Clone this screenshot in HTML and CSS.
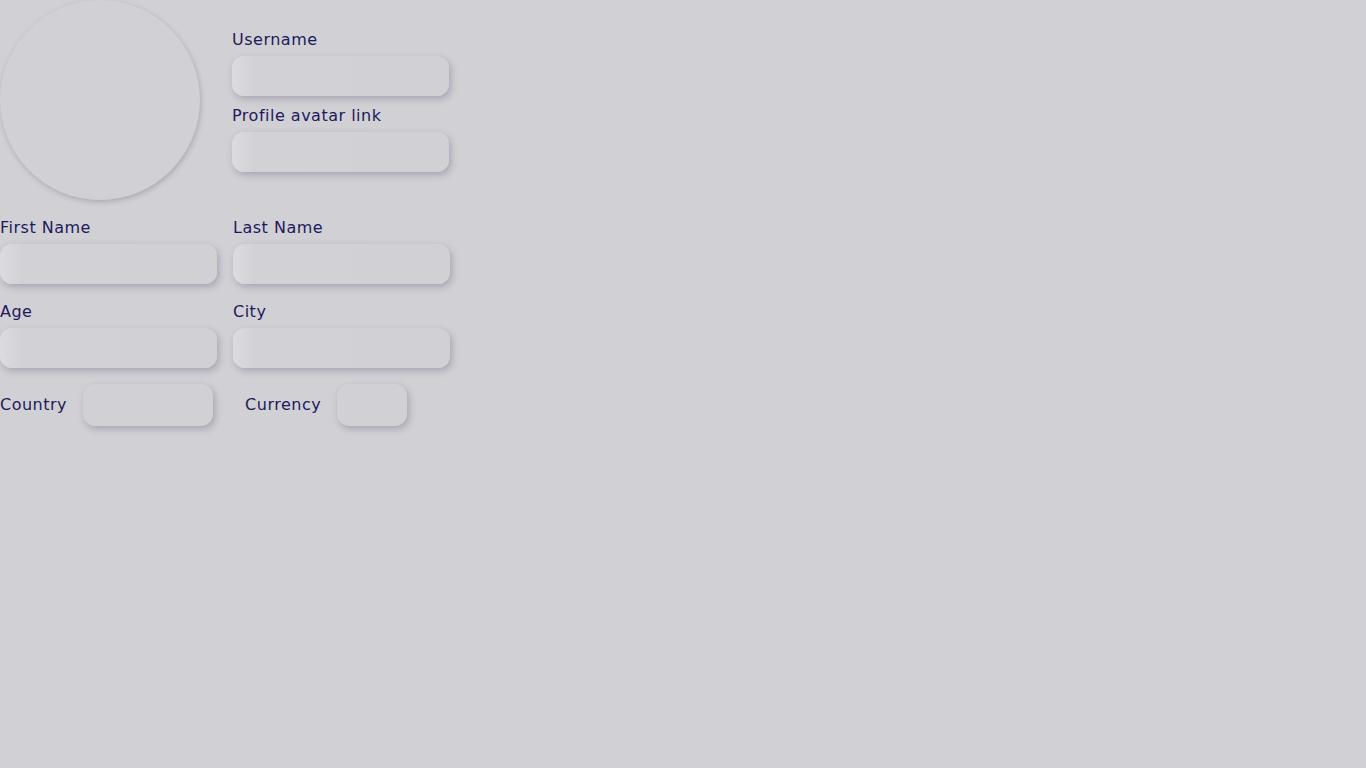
FILE: index.html
```html
<!DOCTYPE html>
<html>
<head>
<meta charset="utf-8">
<link rel="stylesheet" href="styles.css">
</head>
<body>
<div class="profile">
  <div class="top">
    <div class="avatar"></div>
    <div class="top-fields">
      <div class="field">
        <label class="label">Username</label>
        <div class="input"></div>
      </div>
      <div class="field">
        <label class="label">Profile avatar link</label>
        <div class="input"></div>
      </div>
    </div>
  </div>
  <div class="grid">
    <div class="field">
      <label class="label">First Name</label>
      <div class="input"></div>
    </div>
    <div class="field">
      <label class="label">Last Name</label>
      <div class="input"></div>
    </div>
    <div class="field">
      <label class="label">Age</label>
      <div class="input"></div>
    </div>
    <div class="field">
      <label class="label">City</label>
      <div class="input"></div>
    </div>
  </div>
  <div class="selects">
    <div class="select-group">
      <span class="label">Country</span>
      <div class="select country"></div>
    </div>
    <div class="select-group">
      <span class="label">Currency</span>
      <div class="select currency"></div>
    </div>
  </div>
</div>
</body>
</html>
```
FILE: styles.css
```css
html, body {
  margin: 0;
  padding: 0;
  background: #d1d0d5;
  height: 100%;
}
body {
  font-family: "DejaVu Sans", "Open Sans", sans-serif;
  color: #201a5c;
  font-size: 16px;
  letter-spacing: 0.5px;
}
.profile {
  width: 450px;
}
.top {
  display: flex;
  gap: 32px;
}
.avatar {
  width: 200px;
  height: 200px;
  border-radius: 50%;
  background: #d1d0d5;
  box-shadow: 1px 2px 5px rgba(60, 55, 80, 0.25);
  flex: none;
}
.top-fields {
  padding-top: 30px;
  width: 217px;
  display: flex;
  flex-direction: column;
  gap: 10px;
}
.field {
  display: flex;
  flex-direction: column;
  gap: 6px;
}
.label {
  display: block;
  line-height: 20px;
  height: 20px;
  white-space: nowrap;
}
.input {
  height: 40px;
  border-radius: 12px;
  background: linear-gradient(90deg, #dcdbe0 0, #d2d1d6 22px, #d1d0d5 100%);
  box-shadow: 2px 3px 7px rgba(60, 55, 80, 0.28);
}
.grid {
  margin-top: 18px;
  display: grid;
  grid-template-columns: 217px 217px;
  column-gap: 16px;
  row-gap: 18px;
}
.selects {
  margin-top: 16px;
  display: flex;
  gap: 32px;
}
.select-group {
  display: flex;
  align-items: center;
  gap: 16px;
}
.select {
  height: 42px;
  border-radius: 12px;
  background: #d1d0d5;
  box-shadow: 2px 3px 7px rgba(60, 55, 80, 0.28);
}
.country { width: 130px; }
.currency { width: 70px; }
```
